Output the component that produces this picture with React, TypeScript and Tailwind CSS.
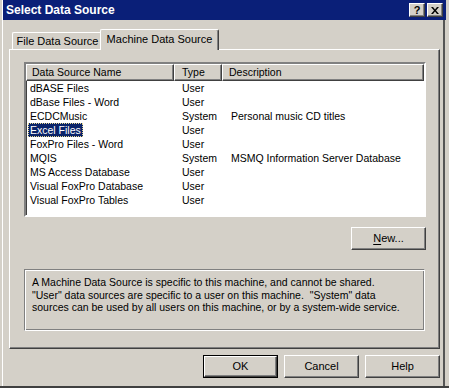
import React from 'react'

const ROWS = [
  { name: 'dBASE Files', type: 'User', desc: '' },
  { name: 'dBase Files - Word', type: 'User', desc: '' },
  { name: 'ECDCMusic', type: 'System', desc: 'Personal music CD titles' },
  { name: 'Excel Files', type: 'User', desc: '', selected: true },
  { name: 'FoxPro Files - Word', type: 'User', desc: '' },
  { name: 'MQIS', type: 'System', desc: 'MSMQ Information Server Database' },
  { name: 'MS Access Database', type: 'User', desc: '' },
  { name: 'Visual FoxPro Database', type: 'User', desc: '' },
  { name: 'Visual FoxPro Tables', type: 'User', desc: '' },
]

// classic raised bevel
const RAISED =
  'border border-t-white border-l-white border-r-[#404040] border-b-[#404040] shadow-[inset_-1px_-1px_0_#808080]'

const Button: React.FC<{ children: React.ReactNode; isDefault?: boolean; className?: string }> = ({
  children,
  isDefault,
  className = '',
}) =>
  isDefault ? (
    <div className={`h-[23px] w-[75px] border border-black ${className}`}>
      <div className={`flex h-full w-full items-center justify-center ${RAISED}`}>{children}</div>
    </div>
  ) : (
    <div className={`flex h-[23px] w-[75px] items-center justify-center ${RAISED} ${className}`}>{children}</div>
  )

const TitleButton: React.FC<{ children: React.ReactNode }> = ({ children }) => (
  <div className={`flex h-[14px] w-[16px] items-center justify-center bg-[#d4d0c8] ${RAISED}`}>{children}</div>
)

export default function App() {
  return (
    <div className="h-[388px] w-[449px] overflow-hidden bg-[#d4d0c8] font-['Liberation_Sans',Arial,sans-serif] text-[11px] leading-none text-black">
      <div className="ml-[2px] flex h-[386px] w-[444px] flex-col border-l border-l-white">
        {/* title bar */}
        <div className="flex h-[20px] items-center bg-[#0a1f78] pl-[3px] pr-[3px]">
          <span className="text-[12px] font-bold text-white">Select Data Source</span>
          <div className="ml-auto flex gap-[2px]">
            <TitleButton>
              <span className="text-[11px] font-bold leading-none">?</span>
            </TitleButton>
            <TitleButton>
              <svg width="8" height="7" viewBox="0 0 8 7">
                <path d="M0 0h2l2 2.5L6 0h2L5 3.5 8 7H6L4 4.5 2 7H0l3-3.5z" fill="#000" />
              </svg>
            </TitleButton>
          </div>
        </div>

        {/* body */}
        <div className="mr-[1px] flex flex-1 flex-col border-r-2 border-r-[#555] pl-[6px] pr-[3px] pt-[9px]">
          {/* tabs */}
          <div className="relative z-10 flex h-[20px] items-end pl-[3px]">
            <div className="flex h-[17px] w-[90px] items-center justify-center rounded-t-[2px] border-l border-t border-l-white border-t-white pt-[1px]">
              File Data Source
            </div>
            <div className="-mb-px -ml-[2px] flex h-[21px] w-[119px] items-center justify-center rounded-t-[2px] border-l border-r border-t border-l-white border-r-[#404040] border-t-white bg-[#d4d0c8] pb-[2px] shadow-[inset_-1px_0_0_#808080]">
              Machine Data Source
            </div>
          </div>

          {/* panel */}
          <div className="flex h-[300px] w-[431px] flex-col border border-t-white border-l-white border-r-[#404040] border-b-[#404040] pl-[14px] pt-[12px] shadow-[inset_-1px_-1px_0_#808080]">
            {/* list view */}
            <div className="h-[155px] w-[402px] overflow-hidden border-2 border-t-[#808080] border-l-[#808080] border-r-white border-b-white bg-white text-[10.5px] shadow-[inset_1px_1px_0_#404040]">
              <div className="flex h-[17px] bg-[#d4d0c8]">
                <div className={`flex w-[148px] items-center pl-[5px] ${RAISED}`}>Data Source Name</div>
                <div className={`flex w-[48px] items-center pl-[7px] ${RAISED}`}>Type</div>
                <div className={`flex flex-1 items-center pl-[6px] ${RAISED}`}>Description</div>
              </div>
              {ROWS.map((r) => (
                <div key={r.name} className="flex h-[14px] items-center">
                  <div className="flex w-[148px] pl-[2px]">
                    <span
                      className={
                        r.selected
                          ? 'flex h-[14px] items-center bg-[#0a246a] px-[2px] text-white outline outline-1 -outline-offset-1 outline-dotted outline-[#e8d890]'
                          : 'px-[2px]'
                      }
                    >
                      {r.name}
                    </span>
                  </div>
                  <div className="w-[48px] pl-[8px]">{r.type}</div>
                  <div className="flex-1 pl-[9px]">{r.desc}</div>
                </div>
              ))}
            </div>

            <div className="flex w-[402px] justify-end pt-[10px]">
              <Button>
                <span>
                  <span className="underline underline-offset-2">N</span>ew...
                </span>
              </Button>
            </div>

            {/* info box */}
            <div className="mt-[19px] h-[62px] w-[401px] border border-t-[#808080] border-l-[#808080] border-r-white border-b-white pl-[7px] pt-[6px] text-[10.5px] leading-[12.5px] shadow-[inset_1px_1px_0_#fff,inset_-1px_-1px_0_#808080]">
              <p className="whitespace-pre">
                A Machine Data Source is specific to this machine, and cannot be shared.
                <br />
                {'"User" data sources are specific to a user on this machine.  "System" data'}
                <br />
                sources can be used by all users on this machine, or by a system-wide service.
              </p>
            </div>
          </div>

          {/* dialog buttons */}
          <div className="mt-[6px] flex w-[431px] justify-end gap-[6px]">
            <Button isDefault>OK</Button>
            <Button>Cancel</Button>
            <Button>Help</Button>
          </div>
        </div>
      </div>
      <div className="h-[2px] w-[449px] bg-[#404040]" />
    </div>
  )
}
